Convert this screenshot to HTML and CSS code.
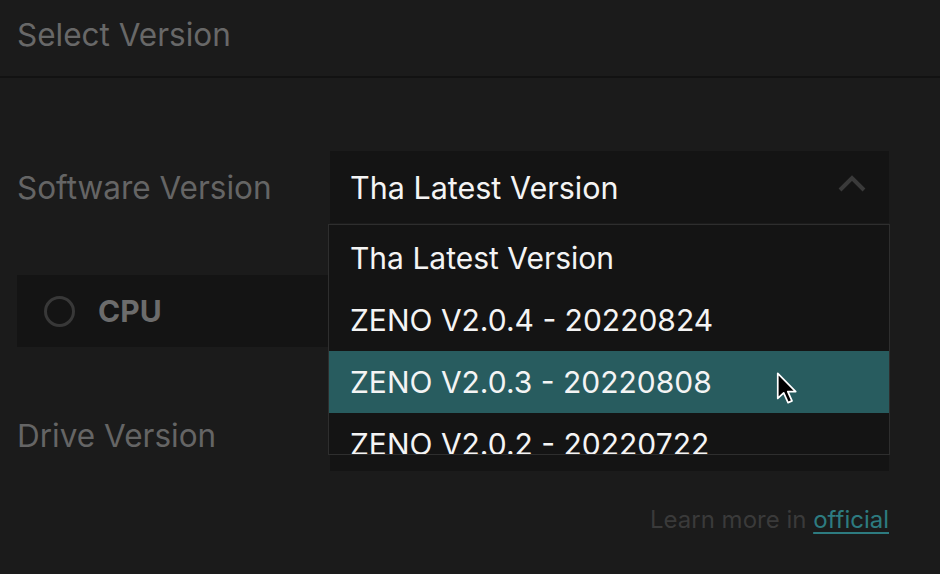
FILE: index.html
```html
<!DOCTYPE html>
<html>
<head>
<meta charset="utf-8">
<link rel="stylesheet" href="styles.css">
</head>
<body>
<div class="page">
  <header class="header"><h1 class="title">Select Version</h1></header>
  <main class="content">
    <div class="row row-software">
      <div class="label">Software Version</div>
      <div class="select-wrap">
        <div class="select open">
          <span class="select-value">Tha Latest Version</span>
          <svg class="chevron" width="30" height="18" viewBox="0 0 30 18"><path d="M3 15 L15 3 L27 15" fill="none" stroke="#3a3a3a" stroke-width="4"/></svg>
        </div>
        <ul class="dropdown">
          <li class="option">Tha Latest Version</li>
          <li class="option">ZENO V2.0.4 - 20220824</li>
          <li class="option active">ZENO V2.0.3 - 20220808</li>
          <li class="option">ZENO V2.0.2 - 20220722</li>
        </ul>
      </div>
    </div>
    <div class="row row-cpu">
      <div class="choice">
        <span class="radio"></span>
        <span class="choice-text">CPU</span>
      </div>
    </div>
    <div class="row row-drive">
      <div class="label">Drive Version</div>
      <div class="select-wrap"><div class="select"></div></div>
    </div>
    <p class="learn">Learn more in <a class="link" href="#">official</a></p>
  </main>
  <svg class="cursor" width="22" height="33" viewBox="0 0 16 25"><path d="M1 1 L1 20 L5.5 15.8 L8.8 23.2 L11.8 21.9 L8.6 14.8 L14.6 14.8 Z" fill="#000" stroke="#fff" stroke-width="1.3" stroke-linejoin="round"/></svg>
</div>
</body>
</html>
```
FILE: styles.css
```css
* { box-sizing: border-box; }
html, body { margin: 0; padding: 0; }
body {
  background: #1b1b1b;
  font-family: Inter, "Open Sans", sans-serif;
  width: 940px;
  height: 574px;
  overflow: hidden;
}
.page { position: relative; width: 940px; height: 574px; }
.header {
  height: 78px;
  border-bottom: 2px solid #121212;
  display: flex;
  align-items: center;
  padding: 0 0 8px 17px;
}
.title {
  margin: 0;
  font-size: 31.5px;
  font-weight: 400;
  color: #686868;
}
.content { padding: 73px 51px 0 17px; }
.row { display: flex; align-items: center; height: 72px; }
.row-cpu, .row-drive { margin-top: 52px; }
.label {
  width: 313px;
  font-size: 31.5px;
  color: #656565;
}
.select-wrap { position: relative; flex: 1; height: 72px; }
.select {
  height: 72px;
  background: #141414;
  display: flex;
  align-items: center;
  justify-content: space-between;
  padding: 0 22px 0 20px;
}
.select-value { font-size: 30.5px; color: #f4f4f4; }
.chevron { display: block; margin-top: -6px; }
.dropdown {
  position: absolute;
  top: 73px;
  left: -2px;
  right: -1px;
  height: 231px;
  margin: 0;
  padding: 2px 0 0;
  list-style: none;
  background: #141414;
  border: 1px solid #2e2e2e;
  overflow: hidden;
  z-index: 5;
}
.option {
  height: 62px;
  display: flex;
  align-items: center;
  padding-left: 21px;
  font-size: 30px;
  color: #f4f4f4;
}
.option.active { background: #285c5f; }
.choice {
  flex: 1;
  height: 72px;
  background: #141414;
  display: flex;
  align-items: center;
  padding-left: 27px;
}
.radio {
  width: 31px;
  height: 31px;
  border-radius: 50%;
  border: 3px solid #383838;
}
.choice-text {
  margin-left: 23px;
  font-size: 30px;
  font-weight: 700;
  color: #6c6c6c;
}
.learn {
  margin: 34px 0 0;
  text-align: right;
  font-size: 24px;
  color: #3a3a3a;
}
.link { color: #2d7b80; text-decoration: underline; text-underline-offset: 4px; text-decoration-thickness: 2px; }
.cursor { position: absolute; left: 776px; top: 372px; z-index: 10; }
```
